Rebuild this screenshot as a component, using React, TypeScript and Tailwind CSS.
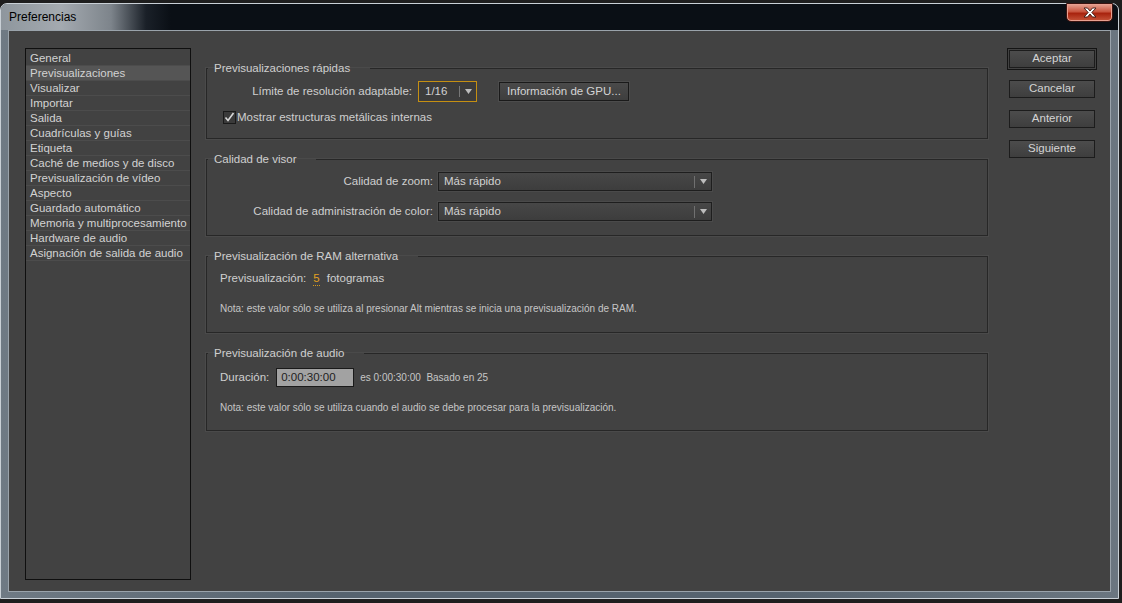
import React from 'react';

const items = [
  'General',
  'Previsualizaciones',
  'Visualizar',
  'Importar',
  'Salida',
  'Cuadrículas y guías',
  'Etiqueta',
  'Caché de medios y de disco',
  'Previsualización de vídeo',
  'Aspecto',
  'Guardado automático',
  'Memoria y multiprocesamiento',
  'Hardware de audio',
  'Asignación de salida de audio',
];

const Arrow = () => (
  <svg width="7" height="5" viewBox="0 0 7 5">
    <path d="M0 0h7L3.5 5z" fill="#bdbdbd" />
  </svg>
);

const Select = ({ value, w }: { value: string; w: string }) => (
  <div className={`${w} flex h-[19px] items-center border border-[#1e1e1e] bg-[linear-gradient(#474747,#3d3d3d)] shadow-[0_0_0_1px_#4a4a4a]`}>
    <span className="flex-1 pl-[5px] text-[#d2d2d2]">{value}</span>
    <span className="h-[12px] w-px bg-[#707070]" />
    <span className="flex w-[16px] justify-center">
      <Arrow />
    </span>
  </div>
);

const Section = ({ title, h, children }: { title: string; h: string; children: React.ReactNode }) => (
  <fieldset className={`${h} border border-[#272727] shadow-[0_0_0_1px_#4a4a4a]`}>
    <legend className="ml-[1px] pl-[6px] pr-[20px] leading-[14px] text-[#cfcfcf]">{title}</legend>
    {children}
  </fieldset>
);

const Btn = ({ label, primary }: { label: string; primary?: boolean }) => (
  <div className={primary ? 'h-[22px] border border-[#141414] p-px' : 'h-[22px] p-[2px]'}>
    <div className="flex h-[18px] items-center justify-center border border-[#1c1c1c] bg-[linear-gradient(#4c4c4c,#3e3e3e)] text-[#d4d4d4]">
      {label}
    </div>
  </div>
);

export default function App() {
  return (
    <div className="h-[603px] w-[1122px] overflow-hidden bg-[#1e1e1e] pt-[3px] font-['Liberation_Sans',Arial,sans-serif] text-[11.5px]">
      <div className="flex h-[596px] w-[1119px] flex-col rounded-t-[7px] border border-[#c9d0d6] bg-[linear-gradient(90deg,#6f7a84,#56636f_30%,#56636f_70%,#6b7680)]">
        {/* title bar */}
        <div className="relative flex h-[26px] items-center rounded-t-[6px] bg-[linear-gradient(90deg,#8e969d_0px,#a4aab0_60px,#7d848b_110px,#1a2028_145px,#0a0f15_170px,#0a0f15_100%)] pl-[8px]">
          <span className="text-[12px] text-black">Preferencias</span>
          <div className="absolute right-[5px] top-[-1px] flex h-[19px] w-[47px] items-center justify-center rounded-b-[5px] border border-[#3a1410] bg-[linear-gradient(#e6a696,#c8553f_45%,#a8230e_55%,#c6553a)] shadow-[inset_0_0_0_1px_#e8a090]">
            <svg width="14" height="11" viewBox="0 0 14 11">
              <path d="M1 1h3.5L7 4l2.5-3H13L8.8 5.5 13 10H9.5L7 7 4.5 10H1l4.2-4.5z" fill="#fff" stroke="#3b1a14" strokeWidth="0.9" />
            </svg>
          </div>
        </div>
        {/* client */}
        <div className="mx-[7px] flex h-[562px] border border-[#9aa3ab] bg-[#424242] pl-[16px] pt-[17px]">
          {/* list */}
          <div className="h-[532px] w-[166px] border border-[#0f0f0f] pt-[2px]">
            {items.map((it, i) => (
              <div
                key={it}
                className={`h-[15px] whitespace-nowrap border-b border-[#4c4c4c] pl-[4px] leading-[14px] text-[#d2d2d2] ${i === 1 ? 'bg-[#555555]' : ''}`}
              >
                {it}
              </div>
            ))}
          </div>

          {/* main */}
          <div className="ml-[15px] flex w-[782px] flex-col gap-[13px] pt-[13px]">
            <Section title="Previsualizaciones rápidas" h="h-[78px]">
              <div className="mt-[6px] flex items-center">
                <span className="w-[205px] text-right text-[#cfcfcf]">Límite de resolución adaptable:</span>
                <div className="ml-[6px] flex h-[21px] w-[59px] items-center border border-[#c58f12] bg-[#3c3c3c]">
                  <span className="flex-1 pl-[6px] text-[#d2d2d2]">1/16</span>
                  <span className="h-[11px] w-px bg-[#777]" />
                  <span className="flex w-[16px] justify-center">
                    <Arrow />
                  </span>
                </div>
                <div className="ml-[22px] flex h-[19px] w-[130px] items-center justify-center border border-[#1a1a1a] bg-[linear-gradient(#4a4a4a,#3e3e3e)] text-[#d4d4d4] shadow-[0_0_0_1px_#4c4c4c]">
                  Información de GPU...
                </div>
              </div>
              <div className="mt-[7px] flex items-center pl-[16px]">
                <span className="flex h-[13px] w-[13px] items-center justify-center border border-[#1a1a1a] bg-[#3a3a3a]">
                  <svg width="11" height="11" viewBox="0 0 11 11">
                    <path d="M1.5 5.5l2.5 3L9.5 1" fill="none" stroke="#d8d8d8" strokeWidth="1.6" />
                  </svg>
                </span>
                <span className="ml-[1px] text-[#cfcfcf]">Mostrar estructuras metálicas internas</span>
              </div>
            </Section>

            <Section title="Calidad de visor" h="h-[84px]">
              <div className="mt-[6px] flex items-center">
                <span className="w-[226px] text-right text-[#cfcfcf]">Calidad de zoom:</span>
                <div className="ml-[5px]">
                  <Select value="Más rápido" w="w-[274px]" />
                </div>
              </div>
              <div className="mt-[11px] flex items-center">
                <span className="w-[226px] text-right text-[#cfcfcf]">Calidad de administración de color:</span>
                <div className="ml-[5px]">
                  <Select value="Más rápido" w="w-[274px]" />
                </div>
              </div>
            </Section>

            <Section title="Previsualización de RAM alternativa" h="h-[84px]">
              <div className="mt-[7px] flex items-center pl-[13px] text-[#cfcfcf]">
                <span>Previsualización:</span>
                <span className="ml-[7px] border-b border-dotted border-[#d49a1a] leading-[13px] text-[#e0a020]">5</span>
                <span className="ml-[7px]">fotogramas</span>
              </div>
              <div className="mt-[14px] pl-[13px] text-[10px] text-[#c6c6c6]">
                Nota: este valor sólo se utiliza al presionar Alt mientras se inicia una previsualización de RAM.
              </div>
            </Section>

            <Section title="Previsualización de audio" h="h-[85px]">
              <div className="mt-[8px] flex items-center pl-[13px] text-[#cfcfcf]">
                <span>Duración:</span>
                <span className="ml-[7px] flex h-[19px] w-[78px] items-center border border-[#1a1a1a] bg-[#a2a2a2] pl-[4px] text-[#1e1e1e]">
                  0:00:30:00
                </span>
                <span className="ml-[6px] text-[10px] text-[#c6c6c6]">es 0:00:30:00&nbsp;&nbsp;Basado en 25</span>
              </div>
              <div className="mt-[13px] pl-[13px] text-[10px] text-[#c6c6c6]">
                Nota: este valor sólo se utiliza cuando el audio se debe procesar para la previsualización.
              </div>
            </Section>
          </div>

          {/* buttons */}
          <div className="ml-[19px] flex w-[90px] flex-col gap-[8px]">
            <Btn label="Aceptar" primary />
            <Btn label="Cancelar" />
            <Btn label="Anterior" />
            <Btn label="Siguiente" />
          </div>
        </div>
      </div>
    </div>
  );
}
